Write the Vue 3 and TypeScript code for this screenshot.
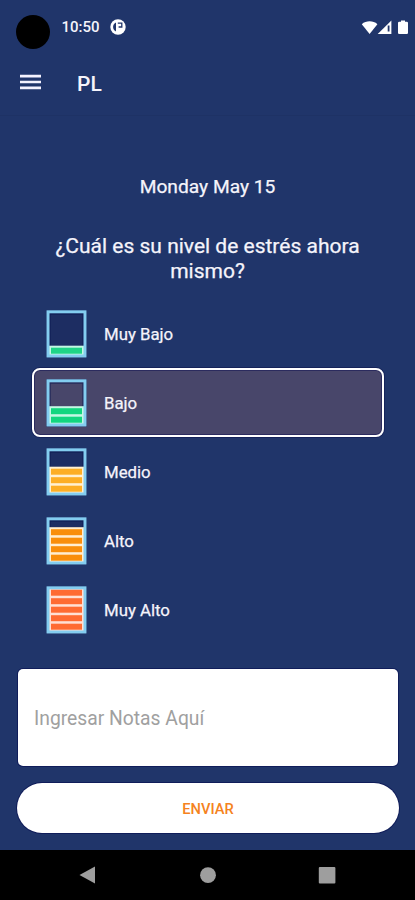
<script setup lang="ts">
import { ref } from 'vue'

interface Level {
  label: string
  bars: number
  color: string
  pale: string
}

const levels: Level[] = [
  { label: 'Muy Bajo', bars: 1, color: '#1fd487', pale: '#c4f7e4' },
  { label: 'Bajo', bars: 2, color: '#12d67f', pale: '#c4f7e4' },
  { label: 'Medio', bars: 3, color: '#fdae25', pale: '#fff0d2' },
  { label: 'Alto', bars: 4, color: '#f98e0b', pale: '#ffedd0' },
  { label: 'Muy Alto', bars: 5, color: '#ff6b32', pale: '#ffe0d4' },
]

const selected = ref(1)
const notes = ref('')
const barTop = (i: number): number => 37.7 - 8.5 * i
</script>

<template>
  <div class="screen">
    <header class="status">
      <span class="camera"></span>
      <span class="time">10:50</span>
      <svg class="app-icon" viewBox="0 0 16 16">
        <circle cx="8" cy="8" r="7.7" fill="#fff" />
        <path d="M6 3.6C3.6 4.5 2.8 7 3.2 9C3.6 10.8 4.6 11.8 6 12.4Z" fill="#20356a" />
        <path d="M7.8 4.1H11.8V8H8.6" fill="none" stroke="#20356a" stroke-width="1.3" />
      </svg>
      <svg class="signals" viewBox="0 0 50 16">
        <path d="M0.8 4.2C5 0.4 12.2 0.4 16.4 4.2L8.6 14Z" fill="#fff" />
        <path d="M16.7 14L30.4 0.6V14Z" fill="#fff" />
        <path d="M27.6 5.5V11.5" stroke="#20356a" stroke-width="1.8" />
        <path d="M40 0.5h4v1.3h1.8q1.2 0 1.2 1.2V13q0 1-1.2 1h-7.6q-1.2 0-1.2-1V3q0-1.2 1.2-1.2H40Z" fill="#fff" />
      </svg>
    </header>

    <nav class="toolbar">
      <svg class="menu" viewBox="0 0 21 16">
        <path d="M0 2.2H21M0 8H21M0 13.8H21" stroke="#f4f2ff" stroke-width="2.7" />
      </svg>
      <span class="title">PL</span>
    </nav>

    <main class="content">
      <p class="date">Monday May 15</p>
      <h1 class="question">¿Cuál es su nivel de estrés ahora mismo?</h1>

      <div class="levels">
        <button
          v-for="(level, index) in levels"
          :key="level.label"
          type="button"
          class="level"
          :class="{ active: selected === index }"
          @click="selected = index"
        >
          <svg class="gauge" viewBox="0 0 41 48">
            <rect x="1.8" y="1.8" width="37.2" height="44" fill="none" stroke="#0c1650" stroke-width="5" opacity="0.5" />
            <rect x="3" y="3" width="35" height="42" :fill="selected === index ? '#48466a' : '#1d2d62'" />
            <rect x="4" y="4" width="33" height="40" fill="none" stroke="#0c1650" stroke-width="1.4" opacity="0.6" />
            <rect x="3" :y="barTop(level.bars - 1) - 2" width="35" :height="47 - barTop(level.bars - 1)" :fill="level.pale" />
            <rect v-for="n in level.bars" :key="n" x="5" :y="barTop(n - 1)" width="31" height="6" :fill="level.color" />
            <rect x="2" y="1.8" width="37" height="44.2" fill="none" stroke="#83cdf0" stroke-width="3" />
          </svg>
          <span>{{ level.label }}</span>
        </button>
      </div>

      <input v-model="notes" class="notes" type="text" placeholder="Ingresar Notas Aquí" />
      <button type="button" class="send">ENVIAR</button>
    </main>

    <footer class="navbar">
      <svg viewBox="0 0 18 18"><path d="M0.5 9L16 0.5V17.5Z" fill="#9e9e9e" /></svg>
      <svg viewBox="0 0 18 18"><circle cx="9" cy="9.2" r="7.9" fill="#9e9e9e" /></svg>
      <svg viewBox="0 0 18 18"><rect x="0.8" y="1" width="16.6" height="16.6" rx="1" fill="#9e9e9e" /></svg>
    </footer>
  </div>
</template>

<style>
body {
  margin: 0;
  background: #20356a;
}
</style>

<style scoped>
.screen {
  width: 415px;
  height: 900px;
  display: flex;
  flex-direction: column;
  overflow: hidden;
  background: #20356a;
  color: #f5f4fb;
  font-family: Roboto, "Liberation Sans", sans-serif;
}
.status {
  height: 54px;
  flex: none;
  display: flex;
  align-items: flex-start;
  box-sizing: border-box;
  padding: 15px 4px 0 16px;
}
.camera {
  width: 34px;
  height: 34px;
  border-radius: 50%;
  background: #000;
}
.time {
  margin-left: 11.5px;
  width: 48.5px;
  font-size: 15px;
  line-height: 24px;
  font-weight: 500;
}
.app-icon {
  width: 16px;
  height: 16px;
  margin-top: 4px;
}
.signals {
  width: 50px;
  height: 16px;
  margin: 5px 0 0 auto;
}
.toolbar {
  height: 62px;
  flex: none;
  display: flex;
  align-items: center;
  box-sizing: border-box;
  padding: 0 20px 2px;
  border-bottom: 1px solid #1e3265;
}
.menu {
  width: 21px;
  height: 16px;
  margin-top: -4px;
}
.title {
  margin-left: 36px;
  font-size: 21px;
  font-weight: 500;
}
.content {
  flex: 1;
  display: flex;
  flex-direction: column;
  padding: 58px 16px 0;
}
.date {
  margin: 0;
  text-align: center;
  font-size: 19.2px;
  line-height: 25px;
  -webkit-text-stroke: 0.25px currentColor;
}
.question {
  margin: 35px 25px 0;
  text-align: center;
  font-size: 21px;
  line-height: 25px;
  font-weight: 400;
  -webkit-text-stroke: 0.25px currentColor;
}
.levels {
  display: flex;
  flex-direction: column;
  margin: 15px 15.5px 0;
}
.level {
  height: 69px;
  display: flex;
  align-items: center;
  gap: 17px;
  box-sizing: border-box;
  padding: 0 0 0 12.5px;
  border: 2px solid transparent;
  border-radius: 8px;
  background: none;
  color: inherit;
  font: 400 16.8px Roboto, "Liberation Sans", sans-serif;
  text-align: left;
  -webkit-text-stroke: 0.25px currentColor;
}
.level.active {
  border-color: #fff;
  background: #48466a;
  box-shadow: 0 0 0 1px #15235a, inset 0 0 0 1px #2b2b5e;
}
.gauge {
  width: 41px;
  height: 48px;
}
.notes {
  height: 97px;
  box-sizing: border-box;
  margin: 25px 1px 0 2px;
  padding: 2px 16px 0;
  border: 0;
  border-radius: 5px;
  background: #fff;
  box-shadow: 0 0 0 1px #101d5a;
  color: #333;
  font: 400 19.3px Roboto, "Liberation Sans", sans-serif;
}
.notes::placeholder {
  color: #a0a0a0;
  opacity: 1;
}
.send {
  height: 50px;
  margin: 17px 0 0 1px;
  padding: 1px 0 0;
  border: 0;
  border-radius: 26px;
  background: #fff;
  box-shadow: 0 0 0 1px #101d5a;
  color: #f58220;
  font: 500 14.7px Roboto, "Liberation Sans", sans-serif;
}
.navbar {
  height: 50px;
  flex: none;
  display: flex;
  justify-content: space-between;
  align-items: center;
  box-sizing: border-box;
  padding: 0 79px;
  background: #000;
}
.navbar svg {
  width: 18px;
  height: 18px;
}
</style>
